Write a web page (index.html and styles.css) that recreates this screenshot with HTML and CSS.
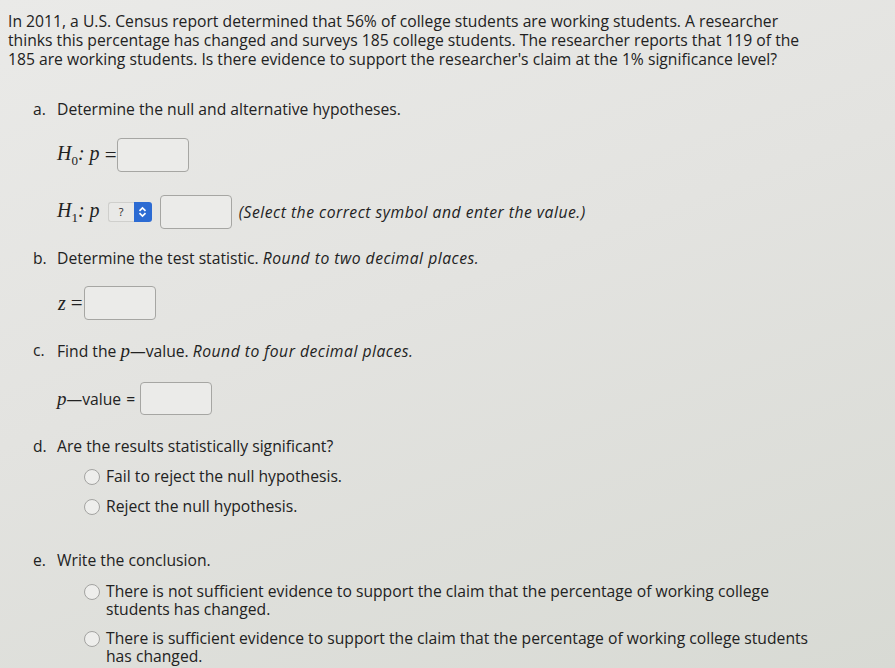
FILE: index.html
```html
<!DOCTYPE html>
<html>
<head>
<meta charset="utf-8">
<link rel="stylesheet" href="styles.css">
</head>
<body>
<div class="page">
  <p class="intro">In 2011, a U.S. Census report determined that 56% of college students are working students. A researcher<br>thinks this percentage has changed and surveys 185 college students. The researcher reports that 119 of the<br>185 are working students. Is there evidence to support the researcher's claim at the 1% significance level?</p>

  <div class="part part-a"><span class="lbl">a.</span><span>Determine the null and alternative hypotheses.</span></div>

  <div class="row row-h0">
    <span class="math">H<sub>0</sub>: p</span><span class="eq">=</span><span class="box"></span>
  </div>

  <div class="row row-h1">
    <span class="math">H<sub>1</sub>: p</span>
    <span class="select"><span class="q">?</span><span class="arrow"><svg width="9" height="12" viewBox="0 0 9 12"><path d="M1.5 4.8 L4.5 2 L7.5 4.8 M1.5 7.2 L4.5 10 L7.5 7.2" fill="none" stroke="#fff" stroke-width="1.7"/></svg></span></span>
    <span class="box box-h1"></span>
    <span class="hint">(Select the correct symbol and enter the value.)</span>
  </div>

  <div class="part part-b"><span class="lbl">b.</span><span>Determine the test statistic. <i>Round to two decimal places.</i></span></div>

  <div class="row row-z">
    <span class="math">z</span><span class="eq">=</span><span class="box"></span>
  </div>

  <div class="part part-c"><span class="lbl">c.</span><span>Find the <span class="math-inline">p</span>—value. <i>Round to four decimal places.</i></span></div>

  <div class="row row-p">
    <span class="math-inline">p</span><span>—value</span><span class="eq2">=</span><span class="box box-p"></span>
  </div>

  <div class="part part-d"><span class="lbl">d.</span><span>Are the results statistically significant?</span></div>
  <div class="options opts-d">
    <div class="opt"><span class="radio"></span><span>Fail to reject the null hypothesis.</span></div>
    <div class="opt"><span class="radio"></span><span>Reject the null hypothesis.</span></div>
  </div>

  <div class="part part-e"><span class="lbl">e.</span><span>Write the conclusion.</span></div>
  <div class="options opts-e">
    <div class="opt"><span class="radio"></span><span class="opt-text">There is not sufficient evidence to support the claim that the percentage of working college<br>students has changed.</span></div>
    <div class="opt"><span class="radio"></span><span class="opt-text">There is sufficient evidence to support the claim that the percentage of working college students<br>has changed.</span></div>
  </div>
</div>
</body>
</html>
```

FILE: styles.css
```css
html, body {
  margin: 0;
  padding: 0;
}
body {
  width: 895px;
  height: 668px;
  overflow: hidden;
  background: linear-gradient(160deg, #eaeae8 0%, #e3e3e0 45%, #d8dad4 100%);
  font-family: "Open Sans", "DejaVu Sans", sans-serif;
  font-size: 15.7px;
  font-weight: 500;
  color: #222222;
}
.page {
  padding: 12px 0 0 8px;
}
.intro {
  margin: 0;
  line-height: 19px;
  white-space: nowrap;
}
.part {
  display: flex;
  margin-left: 25px;
  line-height: 19px;
}
.lbl {
  width: 24px;
}
i, .hint {
  font-style: italic;
  letter-spacing: 0.5px;
}
.part-a { margin-top: 31px; }
.row {
  display: flex;
  align-items: center;
  margin-left: 49px;
}
.row-h0 { margin-top: 19px; }
.row-h1 { margin-top: 23px; }
.math {
  font-family: "Liberation Serif", "DejaVu Serif", serif;
  font-style: italic;
  font-size: 20px;
  font-weight: 400;
}
.math sub {
  font-size: 13px;
  font-style: normal;
}
.math-inline {
  font-family: "Liberation Serif", "DejaVu Serif", serif;
  font-style: italic;
  font-size: 19px;
  font-weight: 400;
}
.eq {
  font-family: "Liberation Serif", serif;
  font-size: 21px;
  font-weight: 400;
  margin-left: 5px;
  margin-right: 1px;
}
.eq2 {
  margin-left: 5px;
  margin-right: 5px;
}
.box {
  display: inline-block;
  width: 70px;
  height: 32px;
  border: 1.5px solid #a6a6a3;
  border-radius: 4px;
  background: #ebebe9;
}
.box-p { height: 31px; }
.select {
  display: inline-flex;
  margin-left: 8px;
  height: 20px;
}
.q {
  width: 25px;
  background: #e9e9e7;
  border: 1px solid #cfcfcc;
  border-right: none;
  border-radius: 3px 0 0 3px;
  font-size: 11px;
  text-align: center;
  line-height: 18px;
}
.arrow {
  width: 18px;
  background: #2c6bd3;
  border-radius: 0 3px 3px 0;
  display: flex;
  align-items: center;
  justify-content: center;
}
.box-h1 { margin-left: 8px; }
.hint {
  margin-left: 7px;
}
.part-b { margin-top: 20px; }
.row-z { margin-top: 18px; margin-left: 50px; }
.part-c { margin-top: 21px; }
.row-p { margin-top: 21px; }
.part-d { margin-top: 22px; }
.options {
  margin-left: 76px;
}
.opt {
  display: flex;
  align-items: flex-start;
  line-height: 19px;
}
.opts-d { margin-top: 11px; }
.opts-d .opt + .opt { margin-top: 11px; }
.radio {
  width: 14px;
  height: 14px;
  border: 1px solid #a3a3a1;
  border-radius: 50%;
  background: #eeeeec;
  margin-right: 6px;
  margin-top: 2px;
  flex: none;
}
.part-e { margin-top: 35px; }
.opts-e { margin-top: 12px; }
.opts-e .opt { line-height: 18px; }
.opts-e .opt + .opt { margin-top: 11px; }
```
